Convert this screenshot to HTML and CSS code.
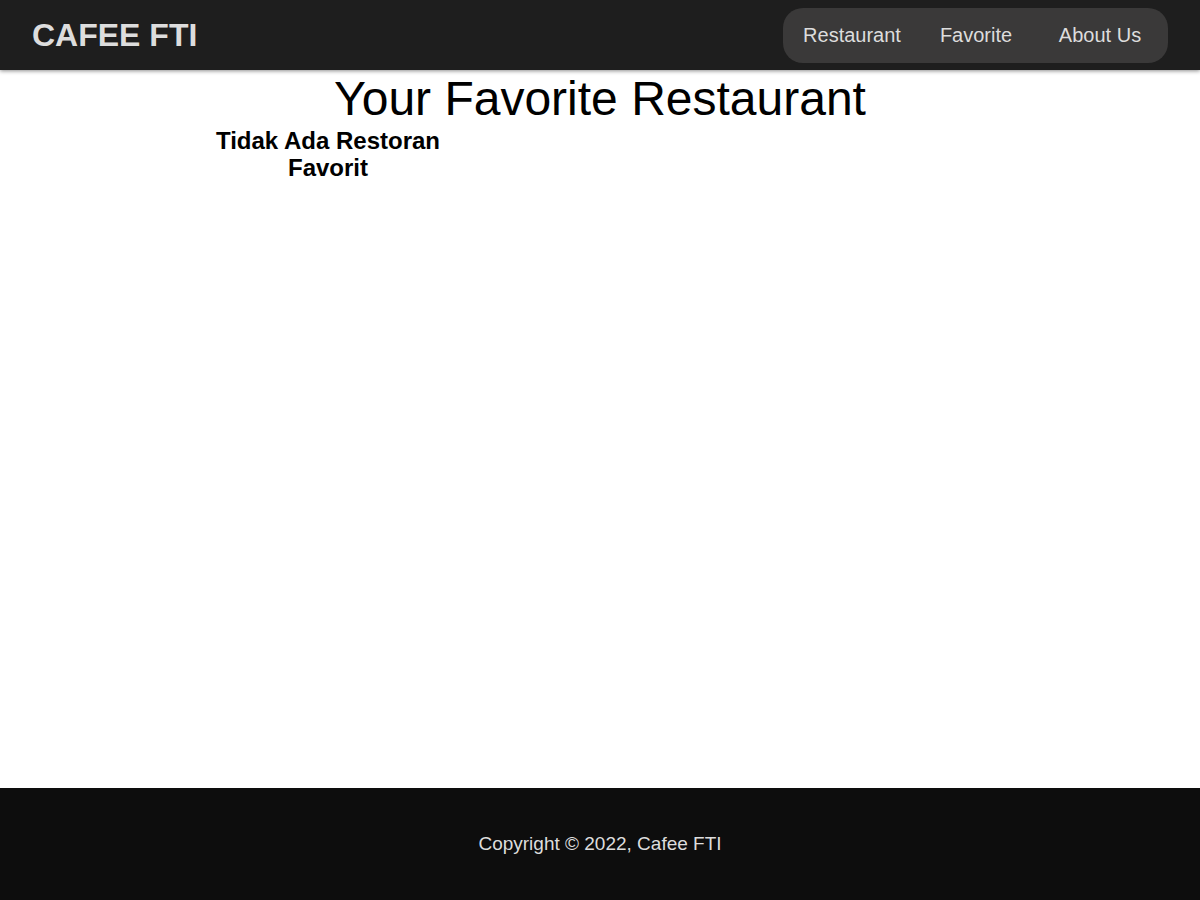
FILE: index.html
```html
<!DOCTYPE html>
<html lang="en">
<head>
<meta charset="utf-8">
<title>Cafee FTI</title>
<link rel="stylesheet" href="styles.css">
</head>
<body>
<header class="app-bar">
  <h1 class="brand">CAFEE FTI</h1>
  <nav class="nav">
    <a class="nav-link" href="#">Restaurant</a>
    <a class="nav-link" href="#">Favorite</a>
    <a class="nav-link" href="#">About Us</a>
  </nav>
</header>
<main class="content">
  <h2 class="page-title">Your Favorite Restaurant</h2>
  <div class="grid">
    <h3 class="empty">Tidak Ada Restoran Favorit</h3>
  </div>
</main>
<footer class="footer">
  <p class="copy">Copyright © 2022, Cafee FTI</p>
</footer>
</body>
</html>
```
FILE: styles.css
```css
* { box-sizing: border-box; }
html, body { margin: 0; padding: 0; }
body {
  font-family: "Liberation Sans", Arial, sans-serif;
  min-height: 100vh;
  display: flex;
  flex-direction: column;
  background: #fff;
  color: #000;
}
.app-bar {
  height: 70px;
  background: #1e1e1e;
  display: flex;
  align-items: center;
  justify-content: space-between;
  padding: 0 32px;
  box-shadow: 0 1px 4px rgba(0,0,0,0.45);
  position: relative;
  z-index: 1;
}
.brand {
  margin: 0;
  font-size: 32px;
  font-weight: bold;
  color: #dddddd;
}
.nav {
  display: flex;
  align-items: center;
  height: 55px;
  padding: 0 6px 0 7px;
  background: #3a3939;
  border-radius: 20px;
  margin-top: 1px;
}
.nav-link {
  width: 124px;
  text-align: center;
  font-size: 20px;
  color: #dddddd;
  text-decoration: none;
}
.content {
  flex: 1;
  padding-top: 1px;
}
.page-title {
  margin: 0;
  text-align: center;
  font-size: 48px;
  font-weight: normal;
}
.grid {
  width: 784px;
  margin: 1px auto 0;
  display: grid;
  grid-template-columns: repeat(3, 240px);
  gap: 32px;
}
.empty {
  margin: 0;
  font-size: 24px;
  line-height: 27px;
  font-weight: bold;
  text-align: center;
}
.footer {
  height: 112px;
  background: #0d0d0d;
  display: flex;
  align-items: center;
  justify-content: center;
}
.copy {
  margin: 0;
  font-size: 19px;
  color: #dddddd;
}
```
